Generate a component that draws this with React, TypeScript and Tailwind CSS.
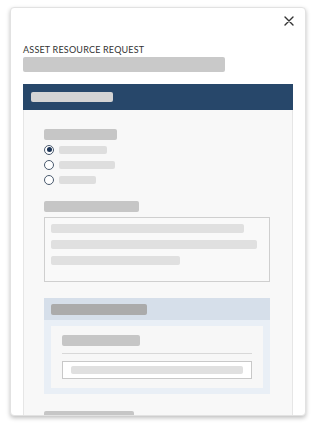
import React from 'react';

const Bar = ({ className }: { className: string }) => <div className={`rounded-[2px] ${className}`} />;

const Radio = ({ checked, width }: { checked?: boolean; width: string }) => (
  <div className="flex items-center h-[15px]">
    <div className="w-[10px] h-[10px] rounded-full border border-[#4a5a6e] bg-white flex items-center justify-center">
      {checked && <div className="w-[5px] h-[5px] rounded-full bg-[#1d3557]" />}
    </div>
    <Bar className={`ml-[5px] h-[8px] bg-[#dedede] ${width}`} />
  </div>
);

const App = () => {
  return (
    <div className="w-[316px] h-[425px] bg-white pt-[7px] px-[10px]" style={{ fontFamily: 'Lato, "Open Sans", sans-serif' }}>
      <div className="h-[409px] overflow-hidden rounded-[4px] border border-[#e2e2e2] bg-white shadow-[0_2px_4px_rgba(0,0,0,0.25)] px-[12px]">
        <div className="flex justify-end pt-[8px] -mr-[1px]">
          <svg width="10" height="10" viewBox="0 0 10 10" className="text-[#333]">
            <path d="M1 1 L9 9 M9 1 L1 9" stroke="currentColor" strokeWidth="1.4" strokeLinecap="round" />
          </svg>
        </div>
        <div className="mt-[18px] text-[9px] leading-[12px] text-[#333] tracking-[0.2px]">ASSET RESOURCE REQUEST</div>
        <Bar className="mt-[1px] w-[202px] h-[15px] bg-[#c9c9c9]" />
        <div className="mt-[12px]">
          <div className="h-[26px] bg-[#27476a] flex items-center pl-[8px]">
            <Bar className="w-[82px] h-[10px] bg-[#d4d4d4]" />
          </div>
          <div className="bg-[#f8f8f8] border-x border-[#e6e6e6] pl-[20px] pr-[22px] pt-[19px] h-[320px]">
            <Bar className="w-[73px] h-[11px] bg-[#c6c6c6]" />
            <div className="mt-[2px]">
              <Radio checked width="w-[48px]" />
              <Radio width="w-[56px]" />
              <Radio width="w-[37px]" />
            </div>
            <Bar className="mt-[14px] w-[95px] h-[11px] bg-[#c6c6c6]" />
            <div className="mt-[5px] h-[65px] border border-[#cfcfcf] bg-[#f9f9f9] px-[6px] pt-[6px] flex flex-col gap-[7px]">
              <Bar className="w-[193px] h-[9px] bg-[#e0e0e0]" />
              <Bar className="w-[206px] h-[9px] bg-[#e0e0e0]" />
              <Bar className="w-[129px] h-[9px] bg-[#e0e0e0]" />
            </div>
            <div className="mt-[16px] bg-[#e9eff6]">
              <div className="h-[22px] bg-[#d6dfea] flex items-center pl-[7px]">
                <Bar className="w-[96px] h-[11px] bg-[#ababab]" />
              </div>
              <div className="px-[7px] pt-[6px] pb-[6px]">
                <div className="bg-[#f7f7f7] px-[11px] pt-[9px] pb-[9px]">
                  <Bar className="w-[78px] h-[11px] bg-[#c6c6c6]" />
                  <div className="mt-[7px] h-px bg-[#d8d8d8]" />
                  <div className="mt-[7px] h-[18px] border border-[#c8c8c8] bg-white flex items-center px-[8px]">
                    <Bar className="w-full h-[8px] bg-[#e0e0e0]" />
                  </div>
                </div>
              </div>
            </div>
            <Bar className="mt-[17px] w-[90px] h-[11px] bg-[#c6c6c6]" />
          </div>
        </div>
      </div>
    </div>
  );
};

export default App;
